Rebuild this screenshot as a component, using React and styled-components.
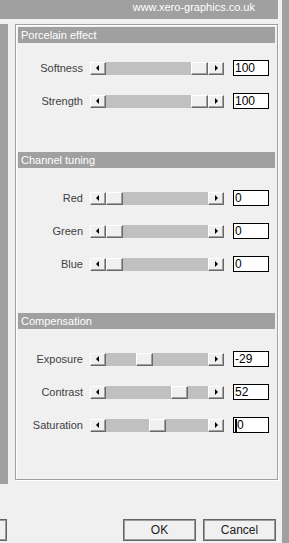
import styled, { createGlobalStyle } from "styled-components";

const GlobalStyle = createGlobalStyle`
  html, body {
    margin: 0;
    padding: 0;
    background: #f0f0f0;
  }
`;

const FONT = `"Liberation Sans", Arial, sans-serif`;

const Window = styled.div`
  width: 289px;
  height: 543px;
  display: flex;
  overflow: hidden;
  background: #f0f0f0;
  font-family: ${FONT};
`;

const Main = styled.div`
  width: 282px;
  display: flex;
  flex-direction: column;
`;

const RightEdge = styled.div`
  width: 7px;
  background: #a0a0a0;
`;

const TopBar = styled.div`
  width: 278px;
  height: 19px;
  box-sizing: border-box;
  padding-right: 23px;
  background: #a0a0a0;
  color: #fff;
  font-size: 11px;
  line-height: 15px;
  text-align: right;
`;

const Body = styled.div`
  display: flex;
  gap: 7px;
  margin-top: 5px;
  height: 460px;
`;

const SidePanel = styled.div`
  width: 8px;
  background: #a0a0a0;
`;

const GroupBox = styled.div`
  width: 263px;
  height: 456px;
  box-sizing: border-box;
  border: 1px solid #a0a0a0;
  box-shadow: inset 1px 1px 0 #fff, 1px 1px 0 #fff;
  padding: 2px;
`;

const SectionTitle = styled.div`
  height: 16px;
  margin-top: ${(p) => p.$gap}px;
  padding-left: 3px;
  background: #a0a0a0;
  color: #fff;
  font-size: 11px;
  line-height: 16px;
`;

const Rows = styled.div`
  display: flex;
  flex-direction: column;
  gap: 17px;
  padding-top: ${(p) => p.$pad}px;
`;

const Row = styled.div`
  display: flex;
  align-items: center;
  height: 16px;
`;

const Label = styled.span`
  width: 65px;
  margin-right: 7px;
  text-align: right;
  font-size: 11px;
  color: #404040;
`;

const ScrollBar = styled.div`
  display: flex;
  width: 134px;
  height: 13px;
`;

const raised = `
  box-sizing: border-box;
  background: #f0f0f0;
  border: 1px solid;
  border-color: #fff #696969 #696969 #fff;
  box-shadow: inset -1px -1px 0 #a0a0a0;
`;

const ArrowButton = styled.div`
  ${raised}
  width: 16px;
  display: flex;
  align-items: center;
  justify-content: center;
`;

const Arrow = styled.span`
  width: 0;
  height: 0;
  border-top: 3px solid transparent;
  border-bottom: 3px solid transparent;
  ${(p) =>
    p.$dir === "left"
      ? "border-right: 3px solid #000; margin-right: 2px;"
      : "border-left: 3px solid #000; margin-left: 1px;"}
`;

const Track = styled.div`
  flex: 1;
  display: flex;
  background: #c0c0c0;
`;

const Thumb = styled.div`
  ${raised}
  width: 17px;
`;

const ValueBox = styled.div`
  width: 36px;
  height: 16px;
  margin-left: 9px;
  box-sizing: border-box;
  display: flex;
  align-items: center;
  padding-left: 1px;
  border: 1px solid #000;
  background: #fff;
  color: #000;
  font-size: 12px;
  line-height: 14px;
`;

const Caret = styled.span`
  width: 2px;
  height: 13px;
  background: #000;
`;

const Footer = styled.div`
  display: flex;
  gap: 7px;
  margin-top: 35px;
  padding-right: 6px;
`;

const Button = styled.div`
  width: 73px;
  height: 22px;
  box-sizing: border-box;
  border: 1px solid #646464;
  box-shadow: inset 0 0 0 1px #9c9c9c;
  background: #f0f0f0;
  color: #222;
  font-size: 12px;
  line-height: 20px;
  text-align: center;
  ${(p) => p.$clipped && "margin-left: -66px; margin-right: auto;"}
`;

const TRAVEL = 85;

const Slider = ({ label, value, min, max, focused }) => {
  const offset = Math.round(((value - min) / (max - min)) * TRAVEL);
  return (
    <Row>
      <Label>{label}</Label>
      <ScrollBar>
        <ArrowButton>
          <Arrow $dir="left" />
        </ArrowButton>
        <Track>
          <div style={{ width: offset }} />
          <Thumb />
        </Track>
        <ArrowButton>
          <Arrow $dir="right" />
        </ArrowButton>
      </ScrollBar>
      <ValueBox>
        {focused && <Caret />}
        {value}
      </ValueBox>
    </Row>
  );
};

const sections = [
  {
    title: "Porcelain effect",
    gap: 0,
    pad: 17,
    items: [
      { label: "Softness", value: 100, min: 0, max: 100 },
      { label: "Strength", value: 100, min: 0, max: 100 },
    ],
  },
  {
    title: "Channel tuning",
    gap: 43,
    pad: 22,
    items: [
      { label: "Red", value: 0, min: 0, max: 255 },
      { label: "Green", value: 0, min: 0, max: 255 },
      { label: "Blue", value: 0, min: 0, max: 255 },
    ],
  },
  {
    title: "Compensation",
    gap: 41,
    pad: 22,
    items: [
      { label: "Exposure", value: -29, min: -100, max: 100 },
      { label: "Contrast", value: 52, min: -100, max: 100 },
      { label: "Saturation", value: 0, min: -100, max: 100, focused: true },
    ],
  },
];

const App = () => {
  return (
    <>
      <GlobalStyle />
      <Window>
        <Main>
          <TopBar>www.xero-graphics.co.uk</TopBar>
          <Body>
            <SidePanel />
            <GroupBox>
              {sections.map((s) => (
                <div key={s.title}>
                  <SectionTitle $gap={s.gap}>{s.title}</SectionTitle>
                  <Rows $pad={s.pad}>
                    {s.items.map((it) => (
                      <Slider key={it.label} {...it} />
                    ))}
                  </Rows>
                </div>
              ))}
            </GroupBox>
          </Body>
          <Footer>
            <Button $clipped />
            <Button>OK</Button>
            <Button>Cancel</Button>
          </Footer>
        </Main>
        <RightEdge />
      </Window>
    </>
  );
};

export default App;
